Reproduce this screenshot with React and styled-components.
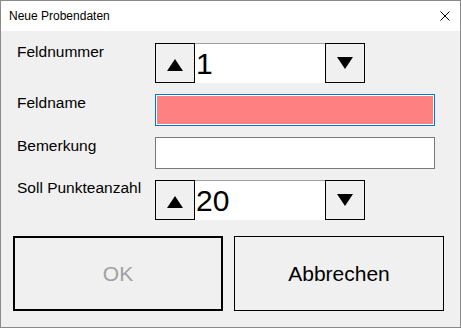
import React from 'react';
import styled, { createGlobalStyle } from 'styled-components';

const GlobalStyle = createGlobalStyle`
	html, body {
		margin: 0;
		padding: 0;
		background: #f0f0f0;
	}
	* {
		box-sizing: border-box;
	}
`;

function UpArrow() {
	return (
		<svg width='16' height='12' viewBox='0 0 16 12'>
			<polygon points='8,0 16,12 0,12' fill='#000' />
		</svg>
	);
}

function DownArrow() {
	return (
		<svg width='16' height='12' viewBox='0 0 16 12'>
			<polygon points='0,0 16,0 8,12' fill='#000' />
		</svg>
	);
}

function CloseIcon() {
	return (
		<svg width='10' height='10' viewBox='0 0 10 10'>
			<path d='M0.5 0.5 L9.5 9.5 M9.5 0.5 L0.5 9.5' stroke='#000' strokeWidth='1' />
		</svg>
	);
}

function Spinner({ value }) {
	return (
		<SpinBox>
			<SpinButton $lift={3}>
				<UpArrow />
			</SpinButton>
			<SpinValue>{value}</SpinValue>
			<SpinButton $lift={-1}>
				<DownArrow />
			</SpinButton>
		</SpinBox>
	);
}

export default function App() {
	return (
		<>
			<GlobalStyle />
			<Window>
				<TitleBar>
					<Title>Neue Probendaten</Title>
					<CloseIcon />
				</TitleBar>
				<Form>
					<Label>Feldnummer</Label>
					<Spinner value='1' />
					<Label>Feldname</Label>
					<TextBox $invalid />
					<Label>Bemerkung</Label>
					<TextBox />
					<Label $shift={-1}>Soll Punkteanzahl</Label>
					<Spinner value='20' />
				</Form>
				<Buttons>
					<DialogButton $default disabled>
						OK
					</DialogButton>
					<DialogButton>Abbrechen</DialogButton>
				</Buttons>
			</Window>
		</>
	);
}

const Window = styled.div`
	width: 461px;
	height: 328px;
	border: 1px solid #8a8a8a;
	background: #f0f0f0;
	display: flex;
	flex-direction: column;
	font-family: 'Liberation Sans', Arial, sans-serif;
`;

const TitleBar = styled.div`
	height: 30px;
	background: #fff;
	display: flex;
	align-items: center;
	justify-content: space-between;
	padding: 0 10px 0 8px;
`;

const Title = styled.span`
	font-size: 12px;
	color: #000;
`;

const Form = styled.div`
	display: grid;
	grid-template-columns: 138px 280px;
	row-gap: 11px;
	padding: 12px 0 0 16px;
`;

const Label = styled.div`
	font-size: 15.5px;
	line-height: 18px;
	color: #000;
	margin-top: ${({ $shift }) => ($shift || 0) + 'px'};
`;

const SpinBox = styled.div`
	display: flex;
	width: 210px;
	height: 40px;
`;

const SpinButton = styled.div`
	width: 40px;
	height: 40px;
	border: 1px solid #000;
	background: #f0f0f0;
	display: flex;
	align-items: center;
	justify-content: center;
	padding-top: ${({ $lift }) => $lift + 'px'};
`;

const SpinValue = styled.div`
	flex: 1;
	height: 40px;
	background: #fff;
	border-top: 1px solid #a0a0a0;
	padding-left: 1px;
	font-size: 30px;
	line-height: 39px;
	color: #000;
`;

const TextBox = styled.div`
	width: 280px;
	height: 32px;
	border: 1px solid ${({ $invalid }) => ($invalid ? '#0078d7' : '#7a7a7a')};
	background: ${({ $invalid }) => ($invalid ? '#ff8080' : '#fff')};
	box-shadow: ${({ $invalid }) => ($invalid ? 'inset 0 0 0 1px #fff' : 'none')};
`;

const Buttons = styled.div`
	display: flex;
	gap: 11px;
	padding: 16px 0 0 12px;
`;

const DialogButton = styled.button`
	width: 210px;
	height: 75px;
	margin: 0;
	padding: 0;
	background: #f0f0f0;
	border: ${({ $default }) => ($default ? '2px' : '1px')} solid #000;
	font-family: 'Liberation Sans', Arial, sans-serif;
	font-size: 21px;
	color: #000;
	&:disabled {
		color: #a0a0a0;
	}
`;
